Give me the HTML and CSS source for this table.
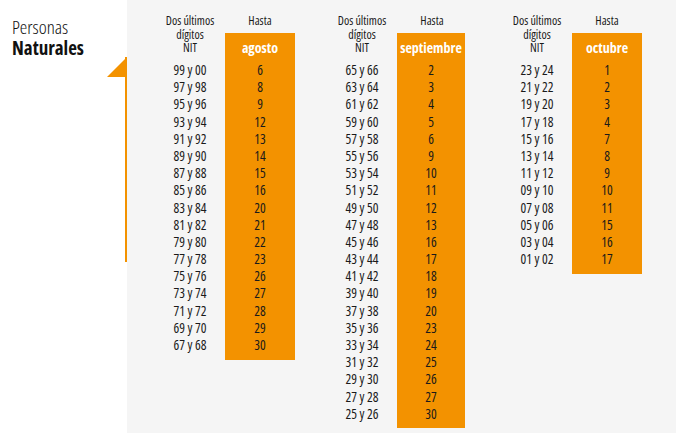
FILE: index.html
```html
<!DOCTYPE html>
<html lang="es">
<head>
<meta charset="utf-8">
<title>Personas Naturales</title>
<link rel="stylesheet" href="styles.css">
</head>
<body>
<div class="page">
  <aside class="side">
    <h1 class="title"><span class="light">Personas</span><span class="bold">Naturales</span></h1>
    <svg class="deco" width="20" height="205" viewBox="0 0 20 205" aria-hidden="true">
      <polygon points="0,20 20,0 20,20" fill="#f39200"/>
      <rect x="18" y="0" width="2" height="205" fill="#f39200"/>
    </svg>
  </aside>
  <main class="panel">
    <section class="group g1">
      <div class="nit">
        <div class="head">Dos últimos<br>dígitos<br>NIT</div>
        <ul class="rows">
          <li>99 y 00</li><li>97 y 98</li><li>95 y 96</li><li>93 y 94</li><li>91 y 92</li><li>89 y 90</li><li>87 y 88</li><li>85 y 86</li><li>83 y 84</li><li>81 y 82</li><li>79 y 80</li><li>77 y 78</li><li>75 y 76</li><li>73 y 74</li><li>71 y 72</li><li>69 y 70</li><li>67 y 68</li>
        </ul>
      </div>
      <div class="due">
        <div class="hasta">Hasta</div>
        <div class="box">
          <div class="month">agosto</div>
          <ul class="rows">
            <li>6</li><li>8</li><li>9</li><li>12</li><li>13</li><li>14</li><li>15</li><li>16</li><li>20</li><li>21</li><li>22</li><li>23</li><li>26</li><li>27</li><li>28</li><li>29</li><li>30</li>
          </ul>
        </div>
      </div>
    </section>
    <section class="group g2">
      <div class="nit">
        <div class="head">Dos últimos<br>dígitos<br>NIT</div>
        <ul class="rows">
          <li>65 y 66</li><li>63 y 64</li><li>61 y 62</li><li>59 y 60</li><li>57 y 58</li><li>55 y 56</li><li>53 y 54</li><li>51 y 52</li><li>49 y 50</li><li>47 y 48</li><li>45 y 46</li><li>43 y 44</li><li>41 y 42</li><li>39 y 40</li><li>37 y 38</li><li>35 y 36</li><li>33 y 34</li><li>31 y 32</li><li>29 y 30</li><li>27 y 28</li><li>25 y 26</li>
        </ul>
      </div>
      <div class="due">
        <div class="hasta">Hasta</div>
        <div class="box narrow">
          <div class="month">septiembre</div>
          <ul class="rows">
            <li>2</li><li>3</li><li>4</li><li>5</li><li>6</li><li>9</li><li>10</li><li>11</li><li>12</li><li>13</li><li>16</li><li>17</li><li>18</li><li>19</li><li>20</li><li>23</li><li>24</li><li>25</li><li>26</li><li>27</li><li>30</li>
          </ul>
        </div>
      </div>
    </section>
    <section class="group g3">
      <div class="nit">
        <div class="head">Dos últimos<br>dígitos<br>NIT</div>
        <ul class="rows">
          <li>23 y 24</li><li>21 y 22</li><li>19 y 20</li><li>17 y 18</li><li>15 y 16</li><li>13 y 14</li><li>11 y 12</li><li>09 y 10</li><li>07 y 08</li><li>05 y 06</li><li>03 y 04</li><li>01 y 02</li>
        </ul>
      </div>
      <div class="due">
        <div class="hasta">Hasta</div>
        <div class="box">
          <div class="month">octubre</div>
          <ul class="rows">
            <li>1</li><li>2</li><li>3</li><li>4</li><li>7</li><li>8</li><li>9</li><li>10</li><li>11</li><li>15</li><li>16</li><li>17</li>
          </ul>
        </div>
      </div>
    </section>
  </main>
</div>
</body>
</html>
```

FILE: styles.css
```css
* { box-sizing: border-box; }
html, body { margin: 0; padding: 0; background: #ffffff; }
body {
  font-family: "Open Sans", "DejaVu Sans Condensed", sans-serif;
  font-stretch: 75%;
  color: #1a1a1a;
}
.page {
  display: flex;
  width: 676px;
  height: 433px;
  overflow: hidden;
}
.side {
  width: 127px;
  flex: none;
  display: flex;
  flex-direction: column;
  padding-top: 17px;
}
.title {
  margin: 0 0 0 12px;
  font-weight: normal;
  display: flex;
  flex-direction: column;
}
.title .light {
  font-size: 19px;
  line-height: 21px;
  font-weight: 300;
  color: #111;
}
.title .bold {
  font-size: 19px;
  line-height: 21px;
  font-weight: 700;
  color: #111;
}
.deco {
  display: block;
  align-self: flex-end;
  margin-top: -2px;
}
.panel {
  flex: 1;
  background: #f5f5f5;
  display: grid;
  grid-template-columns: 172px 175px 1fr;
  align-items: start;
  padding: 14px 0 0 28px;
}
.group {
  display: flex;
}
.nit {
  width: 70px;
  text-align: center;
}
.head {
  font-size: 12px;
  line-height: 13.5px;
}
.rows {
  list-style: none;
  margin: 0;
  padding: 0;
}
.rows li {
  font-size: 13.5px;
  line-height: 17.2px;
  height: 17.2px;
  text-align: center;
}
.nit .rows { margin-top: 7.5px; }
.due { width: 70px; text-align: center; }
.hasta {
  font-size: 12px;
  line-height: 13.5px;
}
.box {
  margin-top: 5.5px;
  width: 70px;
  background: #f39200;
  padding-bottom: 5.5px;
}
.box.narrow { width: 68px; }
.month {
  height: 29px;
  line-height: 29px;
  color: #ffffff;
  font-weight: 700;
  font-size: 14px;
}
```
